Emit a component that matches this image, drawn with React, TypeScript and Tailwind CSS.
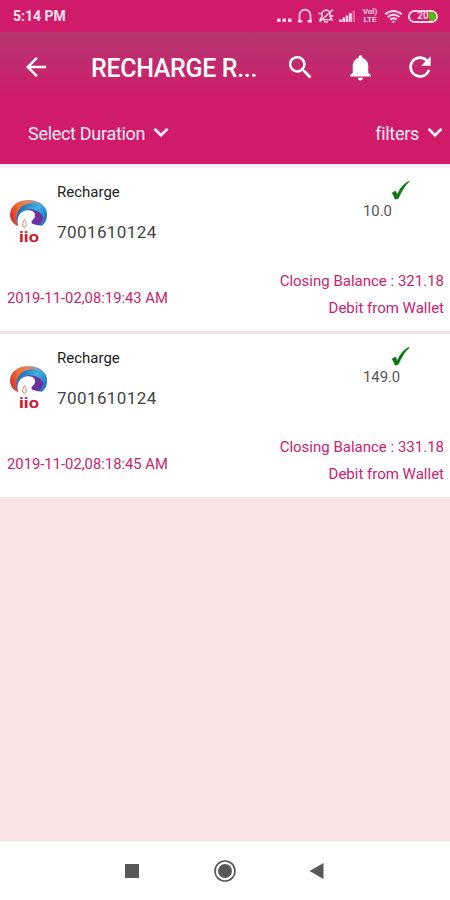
import { MdArrowBack, MdNotifications, MdRefresh, MdSearch } from 'react-icons/md';

interface Transaction {
    number: string;
    amount: string;
    date: string;
    balance: string;
}

const transactions: Transaction[] = [
    { number: '7001610124', amount: '10.0',  date: '2019-11-02,08:19:43 AM', balance: '321.18' },
    { number: '7001610124', amount: '149.0', date: '2019-11-02,08:18:45 AM', balance: '331.18' },
];

const Chevron = () => (
    <svg className="mb-[2px]" width="16" height="11" viewBox="0 0 16 11" fill="none" stroke="currentColor" strokeWidth="2.8">
        <path d="M1.500 1.800 8 8.300l6.500-6.500" />
    </svg>
);

const StatusIcons = () => (
    <div className="flex items-center text-[#fbd3e4]">
        <svg width="15" height="16" viewBox="0 0 15 16" fill="currentColor">
            <path d="M0 10.500h3.500V14H0zM5.500 10.500H9V14H5.500zM11 10.500h3.500V14H11z" />
        </svg>
        {/* headset */}
        <svg className="ml-[5px]" width="17" height="16" viewBox="0 0 17 16" fill="none" stroke="currentColor" strokeWidth="1.7">
            <path d="M2.500 12.500V7.200a5.500 5.500 0 0 1 11 0v5.300" />
            <path d="M1 13.300h4.300M10.700 13.300h4.300" strokeWidth="2.600" />
        </svg>
        {/* muted bell */}
        <svg className="ml-[4px]" width="17" height="16" viewBox="0 0 17 16" fill="none" stroke="currentColor" strokeWidth="1.6">
            <path d="M2 11.700h12L12.200 9V6.500a4.200 4.200 0 0 0-8.400 0V9zM8 2.500V1M6 14h4" />
            <path d="M1.500 14 15 1.500M.5 5.500H3M13 8h2.500" />
        </svg>
        {/* signal */}
        <svg className="ml-[4px]" width="17" height="16" viewBox="0 0 17 16" fill="currentColor">
            <path d="M0 11.500h2.800V14H0zM3.400 9.500h2.700V14H3.400zM6.700 7.500h2.700V14H6.700zM10 5h2.800v9H10z" />
            <path d="M13.500 2.500h2.500V14h-2.500z" opacity=".4" />
        </svg>
        <div className="ml-[6px] w-4 text-center text-[8px] leading-[8px] font-bold">
            <div>Vol)</div>
            <div>LTE</div>
        </div>
        {/* wifi */}
        <svg className="ml-[6px]" width="19" height="15" viewBox="0 0 19 15" fill="none" stroke="currentColor" strokeWidth="2.100">
            <path d="M1.200 5.300c5-4.400 11.600-4.400 16.600 0M3.700 8c3.600-3 8-3 11.600 0M6.200 10.600c2.200-1.600 4.400-1.600 6.600 0" />
            <path d="M7.500 12h4l-2 2.400z" fill="currentColor" stroke="none" />
        </svg>
        <div className="relative ml-[5px] flex h-[13px] w-[30px] items-center justify-center overflow-hidden rounded-full border-2 border-[#fbd3e4] text-[10px] leading-none font-bold">
            <span className="absolute right-0 h-full w-[7px] bg-[#55b913]" />
            <span className="relative">20</span>
        </div>
    </div>
);

const OperatorLogo = () => (
    <svg width="40" height="48" viewBox="0 0 40 48" fill="none">
        <defs>
            <linearGradient id="outer" x1="2" y1="24" x2="38" y2="14" gradientUnits="userSpaceOnUse">
                <stop stopColor="#d9262b" />
                <stop offset=".3" stopColor="#f2702d" />
                <stop offset=".6" stopColor="#d98a68" />
                <stop offset="1" stopColor="#3ba9dc" />
            </linearGradient>
            <linearGradient id="inner" x1="8" y1="12" x2="34" y2="26" gradientUnits="userSpaceOnUse">
                <stop stopColor="#2467b5" />
                <stop offset=".55" stopColor="#3db3e4" />
                <stop offset="1" stopColor="#2775bd" />
            </linearGradient>
        </defs>
        <path d="M9 27C5 26 1 21 1 15.500 1.500 6.500 9 1 19.500 1 31 1 38 7.500 38 15.500c0 5-2 9-5.500 11.500L12 19z" fill="url(#outer)" />
        <path d="M9 26C5 17 9 5.500 22 4.500c10-.5 16 4 16 11 0 5-2 9-5.500 11.500L16 12z" fill="url(#inner)" />
        <path d="M18 10.500c8-1 15 3 16.500 8.500l-4 7.500-8-1.500c-3-1-1-3 1-5 3-3 0-6-5.500-9.500z" fill="#6d329e" />
        <path d="M9.500 27.500C7 19 10 13 17 11.500c6.500-1.200 9.500 2 9 5.800-.5 3.200-4 4.200-3.500 6.200.8 2 4 2 6 3.500z" fill="#fff" />
        <path d="M15.500 20.500c2 3 2 4.500 1.500 6.500l-2 1.500-1.500-2.500c0-2 1-3.500 2-5.500z" stroke="#e48664" strokeWidth="1" />
        <text x="10" y="42.500" fill="#d2192f" fontFamily="Roboto" fontWeight="700" fontSize="15" textLength="20" lengthAdjust="spacingAndGlyphs">iio</text>
    </svg>
);

const TransactionCard = ({ tx }: { tx: Transaction }) => (
    <li className="flex h-[163px] flex-col bg-white">
        <div className="flex pt-[14px] pr-[40px] pl-[9px]">
            <div className="w-12 pt-[17px]"><OperatorLogo /></div>
            <div className="flex-1">
                <div className="text-[15px] leading-5 text-[#222]">Recharge</div>
                <div className="mt-[19px] text-[17px] leading-[22px] tracking-[0.42px] text-[#444]">{tx.number}</div>
            </div>
            <div className="-mt-px w-[47px]">
                <svg className="ml-auto" width="19" height="20" viewBox="0 0 19 20" fill="#08770f" stroke="#08770f" strokeWidth=".5">
                    <path d="M1 12 4.300 10 6.500 13.500C9 7.500 12.500 2.500 18 .2L18.200.7C13.500 4.500 10.500 10.500 7.300 17.600L4 18.200C3.300 15.700 2.300 13.700 1 12z" />
                </svg>
                <div className="text-[14.8px] leading-5 text-[#555]">{tx.amount}</div>
            </div>
        </div>
        <div className="-mt-[5px] flex flex-1 items-end justify-between pr-[6px] pb-[9px] pl-[7px] text-[15px] text-[#c82470]">
            <div className="pb-[14px] text-[14.8px] leading-5">{tx.date}</div>
            <div className="text-right leading-[27px]">
                <div>Closing Balance : {tx.balance}</div>
                <div>Debit from Wallet</div>
            </div>
        </div>
    </li>
);

export default function App() {
    return (
        <div className="flex h-[900px] w-[450px] flex-col overflow-hidden bg-[#f7e4e2] font-[Roboto,sans-serif]">
            <div className="flex h-8 shrink-0 items-center justify-between bg-[#cf1b6a] pr-[12px] pl-[13px]">
                <span className="pt-px text-[14px] font-bold text-[#fde3ee]">5:14 PM</span>
                <StatusIcons />
            </div>

            <header className="h-[132px] shrink-0 bg-[linear-gradient(#b5376f_0px,#cf1b6a_68px)] text-white">
                <div className="flex h-[70px] items-center pr-[14px] pl-[21px]">
                    <MdArrowBack size={30} />
                    <h1 className="ml-10 w-[168px] pt-[3px] text-[25px] font-medium tracking-[-0.33px] whitespace-nowrap">RECHARGE R...</h1>
                    <MdSearch className="ml-[26px]" size={31} />
                    <MdNotifications className="ml-[29px]" size={31} />
                    <MdRefresh className="ml-auto" size={32} />
                </div>
                <div className="flex h-[62px] items-center justify-between pr-[7px] pl-[28px] text-[18px] tracking-[-0.3px] text-[#fdeaf2]">
                    <button className="flex items-center gap-[8px]">Select Duration<Chevron /></button>
                    <button className="flex items-center gap-[8px]">filters<Chevron /></button>
                </div>
            </header>

            <ul className="flex flex-1 flex-col gap-[3px] border-t-4 border-[#fdeff5]">
                {transactions.map(tx => <TransactionCard key={tx.date} tx={tx} />)}
            </ul>

            <nav className="flex h-[59px] shrink-0 items-center bg-white pl-[124px] text-[#585858]">
                <svg width="16" height="16"><path d="M1 1h14v14H1z" fill="currentColor" /></svg>
                <svg className="ml-[73px]" width="24" height="24" fill="none" stroke="currentColor">
                    <circle cx="12" cy="12" r="10" strokeWidth="1.600" />
                    <circle cx="12" cy="12" r="7" fill="currentColor" stroke="none" />
                </svg>
                <svg className="ml-[71px]" width="18" height="18"><path d="M15.500 1v16L1.500 9z" fill="currentColor" /></svg>
            </nav>
        </div>
    );
}
